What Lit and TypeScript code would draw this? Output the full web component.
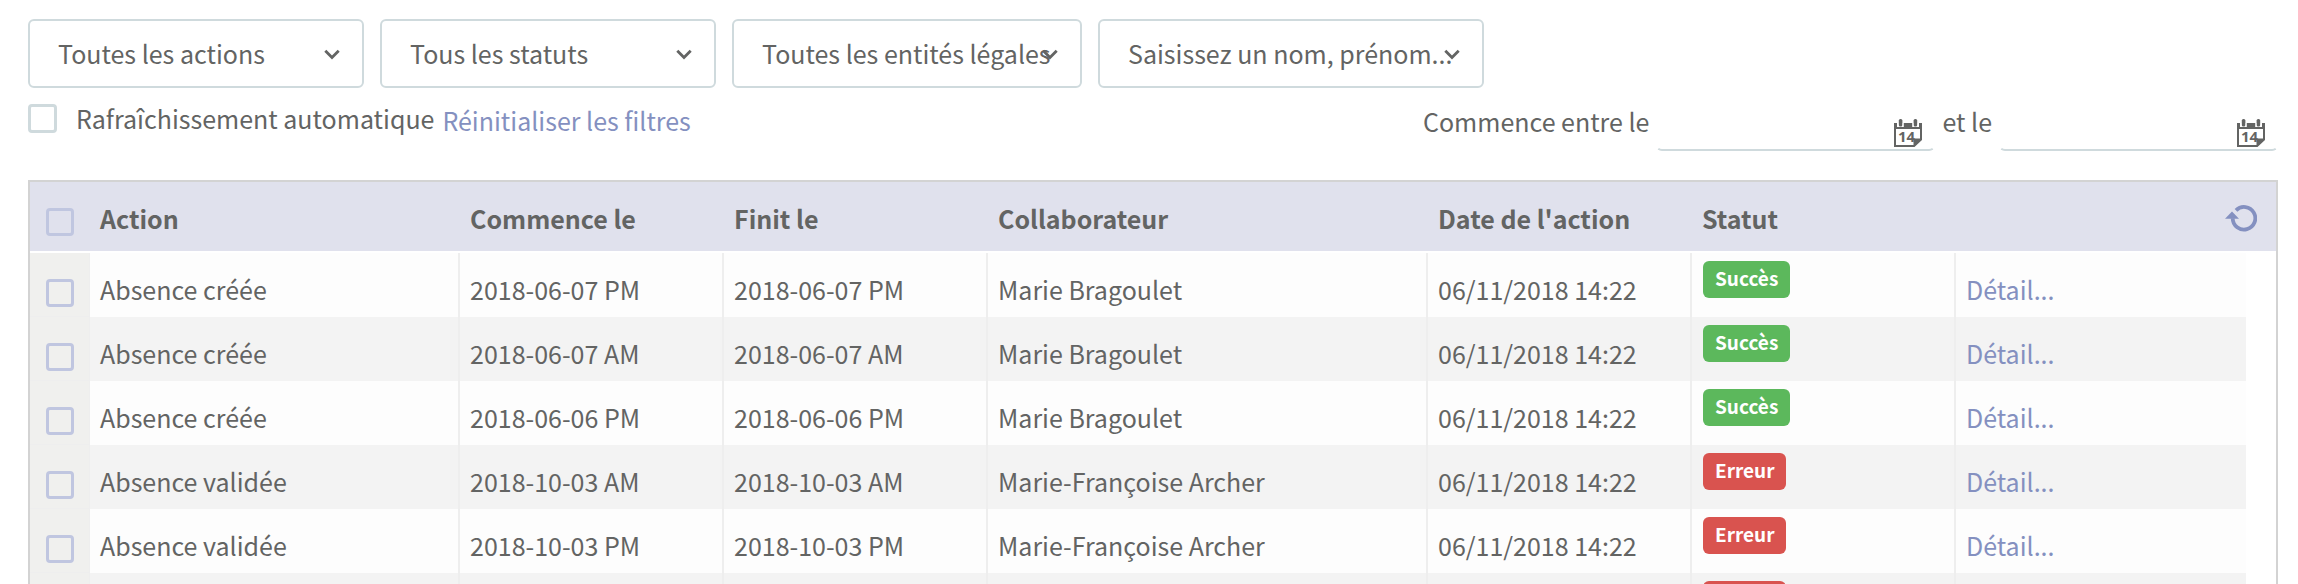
import { LitElement, html, css, svg } from "lit";
import { customElement } from "lit/decorators.js";

interface ActionRow {
  action: string;
  start: string;
  end: string;
  person: string;
  date: string;
  ok: boolean;
}

const row = (action: string, day: string, person: string, ok: boolean): ActionRow => ({
  action,
  start: day,
  end: day,
  person,
  date: "06/11/2018 14:22",
  ok,
});

const ROWS: ActionRow[] = [
  row("Absence créée", "2018-06-07 PM", "Marie Bragoulet", true),
  row("Absence créée", "2018-06-07 AM", "Marie Bragoulet", true),
  row("Absence créée", "2018-06-06 PM", "Marie Bragoulet", true),
  row("Absence validée", "2018-10-03 AM", "Marie-Françoise Archer", false),
  row("Absence validée", "2018-10-03 PM", "Marie-Françoise Archer", false),
  row("", "", "", false),
];

const FILTERS = [
  { label: "Toutes les actions", name: "Action", size: "small" },
  { label: "Tous les statuts", name: "Statut", size: "small" },
  { label: "Toutes les entités légales", name: "Entité légale", size: "medium" },
  { label: "Saisissez un nom, prénom...", name: "Collaborateur", size: "large" },
];

const chevron = html`<svg class="chevron" viewBox="0 0 16 11" aria-hidden="true">
  ${svg`<path d="M1.300 1.800 L8 8.600 L14.700 1.800" fill="none" stroke="#636463" stroke-width="2.800"/>`}
</svg>`;

const calendar = html`<svg class="calendar-icon" viewBox="0 0 28 28" aria-hidden="true">
  ${svg`
    <path d="M0 4h3v4h6.500V4h9v4H25V4h3v17l-7.500 7H0z" fill="#636463"/>
    <path d="M2 10h24v9.500h-6.500V26H2z" fill="#fff"/>
    <rect x="4.800" y="0" width="3.600" height="7.600" rx="1.600" fill="#636463"/>
    <rect x="19.600" y="0" width="3.600" height="7.600" rx="1.600" fill="#636463"/>
    <path d="M3 4h1.300v4H3zM8.600 4h1v4h-1zM18.400 4h1v4h-1zM23.700 4H25v4h-1.300z" fill="#fff"/>
    <text x="4" y="23" font-size="15" font-weight="700" font-family="Open Sans, sans-serif" fill="#636463">14</text>
  `}
</svg>`;

const refresh = html`<svg class="refresh-icon" viewBox="0 0 32 27" aria-hidden="true">
  ${svg`
    <path d="M11 5.300 A11.300 11.300 0 1 1 7.700 13.300" fill="none" stroke="#8490c0" stroke-width="3.800"/>
    <path d="M0 13.800 L7 6.500 L14 13.800z" fill="#8490c0"/>
  `}
</svg>`;

@customElement("app-root")
export class AppRoot extends LitElement {
  static styles = css`
    :host {
      display: block;
      box-sizing: border-box;
      height: 100vh;
      overflow: hidden;
      padding: 19px 20px 0 28px;
      background: #fff;
      color: #636463;
      font-family: "Noto Sans CJK SC", "Open Sans", sans-serif;
      font-size: 25px;
      line-height: 36px;
    }
    *, *::before {
      box-sizing: border-box;
    }
    a {
      color: #8490c0;
      text-decoration: none;
    }
    .filters {
      display: flex;
      flex-wrap: wrap;
      gap: 16px;
    }
    .filter {
      position: relative;
    }
    .small { width: 336px; }
    .medium { width: 350px; }
    .large { width: 386px; }
    .filter select {
      display: block;
      appearance: none;
      width: 100%;
      height: 69px;
      margin: 0;
      padding: 0 0 2px 28px;
      border: 2px solid #cfdadd;
      border-radius: 6px;
      background: #fff;
      color: inherit;
      font: inherit;
    }
    .chevron {
      position: absolute;
      top: 30px;
      right: 24px;
      width: 16px;
      height: 11px;
      pointer-events: none;
    }
    .options {
      display: flex;
      align-items: flex-start;
      margin-top: 16px;
      white-space: nowrap;
    }
    .auto {
      display: flex;
      gap: 19px;
      line-height: 28px;
    }
    input[type="checkbox"] {
      appearance: none;
      display: block;
      flex: none;
      width: 28px;
      height: 28px;
      margin: 0;
      border: 3px solid #c0c6e0;
      border-radius: 4px;
    }
    .auto input[type="checkbox"] {
      width: 29px;
      height: 29px;
      border-color: #cfdadd;
    }
    .reset {
      margin-left: 8px;
      line-height: 32px;
    }
    .period {
      display: flex;
      align-items: flex-start;
      gap: 7px;
      margin-left: auto;
      line-height: 34px;
    }
    .date {
      position: relative;
      width: 279px;
    }
    .date input {
      display: block;
      width: 100%;
      height: 47px;
      padding: 0 48px 0 8px;
      border: 2px solid transparent;
      border-bottom-color: #cfdadd;
      border-radius: 6px;
      background: #fff;
      color: inherit;
      font: inherit;
    }
    button {
      display: inline-block;
      margin: 0;
      padding: 0;
      border: 0;
      background: none;
      cursor: pointer;
    }
    .date button {
      position: absolute;
      right: 13px;
      bottom: 4px;
      height: 28px;
    }
    .calendar-icon {
      display: block;
      width: 28px;
      height: 28px;
    }
    .refresh-icon {
      display: block;
      width: 32px;
      height: 27px;
    }
    .panel {
      margin-top: 29px;
      border: 2px solid #d3d3d3;
    }
    table {
      width: 100%;
      table-layout: fixed;
      border-collapse: separate;
      border-spacing: 0;
    }
    .c-check { width: 60px; }
    .c-action { width: 370px; }
    .c-mid { width: 264px; }
    .c-person { width: 440px; }
    .c-end { width: 30px; }
    th {
      height: 71px;
      padding: 18px 10px 15px;
      border-bottom: 2px solid #fff;
      background: #e0e1ed;
      font-weight: 700;
      text-align: left;
      vertical-align: top;
      white-space: nowrap;
    }
    td {
      height: 64px;
      padding: 18px 10px 10px;
      border-right: 2px solid #eee;
      background: #fdfdfd;
      vertical-align: top;
      white-space: nowrap;
    }
    tr:nth-child(even) td {
      background: #f3f3f3;
    }
    td.last {
      border-right: 0;
    }
    tbody tr td.end {
      padding: 0;
      border: 0;
      background: #fff;
    }
    tbody tr td.check {
      border-right: 1px solid #eee;
      border-bottom: 1px solid #eee;
      background: #f0f0ee;
    }
    th.check,
    td.check {
      padding: 26px 0 0 16px;
    }
    th.tools {
      padding: 23px 19px 0 0;
    }
    .tools button {
      display: block;
      margin-left: auto;
    }
    td.status {
      padding: 8px 11px 0;
    }
    .badge {
      display: block;
      width: fit-content;
      padding: 0 12px 4px;
      border-radius: 6px;
      color: #fff;
      font-size: 19px;
      font-weight: 700;
      line-height: 33px;
    }
    .success { background: #5cb85c; }
    .error { background: #d9534f; }
  `;

  render() {
    return html`
      <div class="filters">
        ${FILTERS.map(
          (f) => html`<div class="filter ${f.size}">
            <select aria-label=${f.name}><option>${f.label}</option></select>
            ${chevron}
          </div>`
        )}
      </div>
      <div class="options">
        <label class="auto"><input type="checkbox" />Rafraîchissement automatique</label>
        <a class="reset" href="#">Réinitialiser les filtres</a>
        <div class="period">
          <label for="from">Commence entre le</label>
          <div class="date">
            <input id="from" type="text" />
            <button type="button" aria-label="Choisir la date de début">${calendar}</button>
          </div>
          <label for="to">et le</label>
          <div class="date">
            <input id="to" type="text" />
            <button type="button" aria-label="Choisir la date de fin">${calendar}</button>
          </div>
        </div>
      </div>
      <div class="panel">
        <table>
          <colgroup>
            <col class="c-check" />
            <col class="c-action" />
            <col class="c-mid" />
            <col class="c-mid" />
            <col class="c-person" />
            <col class="c-mid" />
            <col class="c-mid" />
            <col />
            <col class="c-end" />
          </colgroup>
          <thead>
            <tr>
              <th class="check"><input type="checkbox" aria-label="Tout sélectionner" /></th>
              <th>Action</th>
              <th>Commence le</th>
              <th>Finit le</th>
              <th>Collaborateur</th>
              <th>Date de l'action</th>
              <th>Statut</th>
              <th class="tools" colspan="2">
                <button type="button" aria-label="Actualiser">${refresh}</button>
              </th>
            </tr>
          </thead>
          <tbody>
            ${ROWS.map(
              (r) => html`<tr>
                <td class="check"><input type="checkbox" aria-label="Sélectionner la ligne" /></td>
                <td>${r.action}</td>
                <td>${r.start}</td>
                <td>${r.end}</td>
                <td>${r.person}</td>
                <td>${r.action ? r.date : ""}</td>
                <td class="status">
                  <span class="badge ${r.ok ? "success" : "error"}">${r.ok ? "Succès" : "Erreur"}</span>
                </td>
                <td class="last">${r.action ? html`<a href="#">Détail...</a>` : ""}</td>
                <td class="end"></td>
              </tr>`
            )}
          </tbody>
        </table>
      </div>
    `;
  }
}
